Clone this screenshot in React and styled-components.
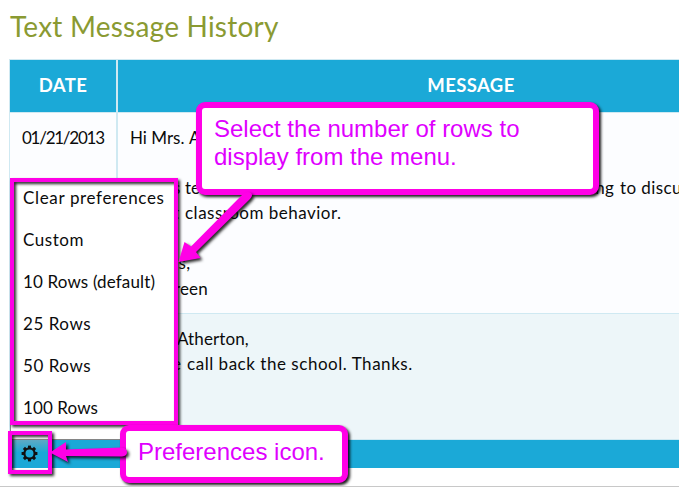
import React from "react";
import styled, { createGlobalStyle } from "styled-components";

const GlobalStyle = createGlobalStyle`
  * { box-sizing: border-box; }
  html, body { margin: 0; background: #fff; }
  body { overflow: hidden; }
`;

const Page = styled.main`
  position: relative;
  width: 679px;
  height: 487px;
  overflow: hidden;
  padding: 0 0 0 9px;
  border-bottom: 1px solid #c8c8c8;
  font: 17px/25.2px Lato, sans-serif;
  color: #0b0b0b;
`;

const Title = styled.h1`
  margin: 0;
  height: 59px;
  padding: 9px 0 0 1px;
  font-size: 28px;
  line-height: 35px;
  font-weight: 400;
  letter-spacing: 0.22px;
  color: #8a9a32;
`;

const Table = styled.section`
  width: 816px;
  border: 1px solid #cfe9f2;
  border-bottom: 0;
`;

const Row = styled.div`
  display: grid;
  grid-template-columns: 106px 1fr;
  height: ${(p) => p.$height}px;
  background: ${(p) => p.$bg};
  border-bottom: 1px solid #cfe9f2;
`;

const HeadCell = styled.div`
  display: flex;
  align-items: center;
  justify-content: center;
  font-size: 18.5px;
  font-weight: 700;
  letter-spacing: 0.4px;
  color: #fff;
  & + & { border-left: 2px solid #cfe9f2; }
`;

const Cell = styled.div`
  padding: ${(p) => p.$top || 12}px 12px 0;
  white-space: nowrap;
  & + & { border-left: 2px solid #cfe9f2; }
`;

const Line = styled.div`
  display: flex;
  height: 25.2px;
`;

const Part = styled.span`
  flex: none;
  width: ${(p) => (p.$width ? `${p.$width}px` : "auto")};
  letter-spacing: ${(p) => p.$spacing || 0}px;
`;

const Footer = styled.div`
  height: 28px;
  background: #1ba9d7;
`;

const Menu = styled.ul`
  position: absolute;
  left: 10px;
  top: 178px;
  width: 168px;
  height: 262px;
  margin: 0;
  padding: 0 0 0 12px;
  list-style: none;
  background: #fff;
  border: 1px solid #858585;
`;

const MenuItem = styled.li`
  display: flex;
  align-items: center;
  height: 42px;
  padding-bottom: 4px;
  letter-spacing: ${(p) => p.$spacing || 0}px;
  white-space: nowrap;
`;

const GearButton = styled.button`
  position: absolute;
  left: 12px;
  top: 440px;
  width: 38px;
  height: 28px;
  padding: 0;
  border: 0;
  background: linear-gradient(#5fa9c4, #1ba9d7 45%);
  svg { position: absolute; left: 9px; top: 5px; }
`;

const Outline = styled.div`
  position: absolute;
  left: ${(p) => p.$x}px;
  top: ${(p) => p.$y}px;
  width: ${(p) => p.$w}px;
  height: ${(p) => p.$h}px;
  border: 4px solid #ff00e6;
  filter: drop-shadow(2px 2px 1.5px rgba(0, 0, 0, 0.85));
`;

const Callout = styled.div`
  position: absolute;
  left: ${(p) => p.$x}px;
  top: ${(p) => p.$y}px;
  width: ${(p) => p.$w}px;
  height: ${(p) => p.$h}px;
  padding: 7px 12px;
  border: 6px solid #ff00e6;
  border-radius: 9px;
  background: #fff;
  box-shadow: 2px 2px 3px rgba(0, 0, 0, 0.9);
  font: 24px/28px "Liberation Sans", Arial, sans-serif;
  color: #df00ff;
  white-space: nowrap;
`;

const Arrows = styled.svg`
  position: absolute;
  inset: 0;
  filter: drop-shadow(2px 2px 1.5px rgba(0, 0, 0, 0.85));
`;

const teeth = [0, 45, 90, 135, 180, 225, 270, 315];

function Gear() {
  return (
    <svg width="17" height="17" viewBox="-8.5 -8.5 17 17">
      <circle r="5.1" fill="none" stroke="#111" strokeWidth="2.2" />
      {teeth.map((a) => (
        <rect key={a} x="-1.5" y="-7.9" width="3" height="2.8" fill="#111" transform={`rotate(${a})`} />
      ))}
    </svg>
  );
}

const options = [
  ["Clear preferences", 0.65],
  ["Custom", 0.55],
  ["10 Rows (default)", 0.15],
  ["25 Rows", 0.55],
  ["50 Rows", 0.55],
  ["100 Rows", 0.1],
];

export default function App() {
  return (
    <Page>
      <GlobalStyle />
      <Title>Text Message History</Title>
      <Table>
        <Row $height={53} $bg="#1ba9d7">
          <HeadCell>DATE</HeadCell>
          <HeadCell>MESSAGE</HeadCell>
        </Row>
        <Row $height={201} $bg="#fcfdff">
          <Cell $top={11.5}><Line><Part $spacing={-1.25}>01/21/2013</Part></Line></Cell>
          <Cell $top={11.5}>
            <Line><Part $width={59}>Hi Mrs.</Part><Part>Atherton,</Part></Line>
            <Line />
            <Line>
              <Part $width={39}>This</Part>
              <Part $width={16}>is</Part>
              <Part $width={380}>teacher Ms. Green from the school.</Part>
              <Part $width={55} $spacing={0.3}>calling</Part>
              <Part $spacing={0.4}>to discuss</Part>
            </Line>
            <Line><Part $width={55} $spacing={0.4}>recent</Part><Part $spacing={0.5}>classroom behavior.</Part></Line>
            <Line />
            <Line><Part $spacing={0.5}>Thanks,</Part></Line>
            <Line><Part $spacing={0.1}>Ms. Green</Part></Line>
          </Cell>
        </Row>
        <Row $height={126} $bg="#edf6f9">
          <Cell />
          <Cell>
            <Line><Part $width={47}>Hello</Part><Part $spacing={0.1}>Atherton,</Part></Line>
            <Line><Part $width={57} $spacing={0.6}>Please</Part><Part $spacing={0.53}>call back the school. Thanks.</Part></Line>
          </Cell>
        </Row>
        <Footer />
      </Table>

      <Menu>
        {options.map(([label, spacing]) => (
          <MenuItem key={label} $spacing={spacing}>{label}</MenuItem>
        ))}
      </Menu>
      <GearButton aria-label="Preferences"><Gear /></GearButton>

      <Outline $x={10} $y={178} $w={168} $h={247} />
      <Outline $x={8} $y={431} $w={44} $h={43} />
      <Callout $x={196} $y={102} $w={403} $h={93}>
        Select the number of rows to<br />display from the menu.
      </Callout>
      <Callout $x={120} $y={425} $w={228} $h={58}>Preferences icon.</Callout>
      <Arrows width="679" height="487" fill="#ff00e6">
        <path d="M178.500 262L184.500 242L191 246.500L242 195Q247 190 251.500 193.500Q253 196 250 199L196 252L200.500 258Z" />
        <path d="M50 452.500L66 442L66 449.500L122 447.500Q127 448 127 452.500Q127 456 122 456.500L66 456L68 462Z" />
      </Arrows>
    </Page>
  );
}
